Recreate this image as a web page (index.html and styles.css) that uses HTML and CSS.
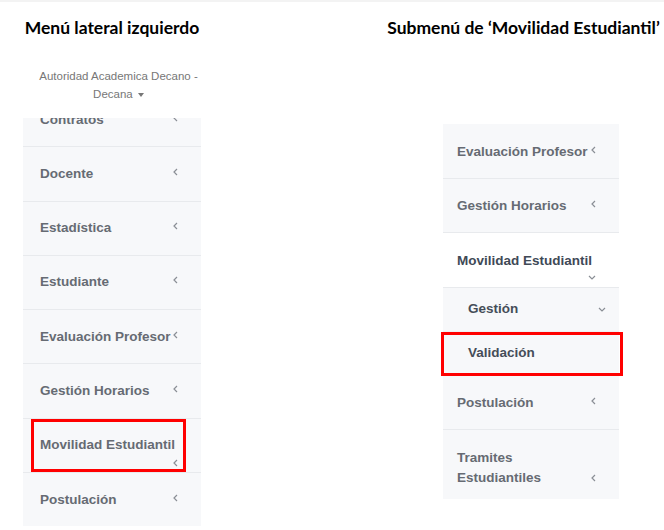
FILE: index.html
```html
<!DOCTYPE html>
<html lang="es">
<head>
  <meta charset="UTF-8"/>
  <meta name="viewport" content="width=device-width,initial-scale=1.0"/>
  <title>Menú lateral – Movilidad Estudiantil</title>
  <link rel="stylesheet" href="styles.css">
</head>
<body>
  <div class="page">

    <section class="col col-left">
      <h2>Menú lateral izquierdo</h2>
      <div class="user">Autoridad Academica Decano - Decana <span class="caret"></span></div>

      <div class="menu menu-left">
        <ul class="menu-list scrolled">
          <li class="item"><span>Contratos</span><svg class="chev" viewBox="0 0 5 8"><polyline points="4,1 1,4 4,7"/></svg></li>
          <li class="item"><span>Docente</span><svg class="chev" viewBox="0 0 5 8"><polyline points="4,1 1,4 4,7"/></svg></li>
          <li class="item"><span>Estadística</span><svg class="chev" viewBox="0 0 5 8"><polyline points="4,1 1,4 4,7"/></svg></li>
          <li class="item"><span>Estudiante</span><svg class="chev" viewBox="0 0 5 8"><polyline points="4,1 1,4 4,7"/></svg></li>
          <li class="item"><span>Evaluación Profesor</span><svg class="chev" viewBox="0 0 5 8"><polyline points="4,1 1,4 4,7"/></svg></li>
          <li class="item"><span>Gestión Horarios</span><svg class="chev" viewBox="0 0 5 8"><polyline points="4,1 1,4 4,7"/></svg></li>
          <li class="item marked marked-left"><span>Movilidad Estudiantil</span><svg class="chev" viewBox="0 0 5 8"><polyline points="4,1 1,4 4,7"/></svg></li>
          <li class="item"><span>Postulación</span><svg class="chev" viewBox="0 0 5 8"><polyline points="4,1 1,4 4,7"/></svg></li>
        </ul>
      </div>
    </section>

    <section class="col col-right">
      <h2>Submenú de ‘Movilidad Estudiantil’</h2>

      <div class="menu menu-right">
        <ul class="menu-list">
          <li class="item"><span>Evaluación Profesor</span><svg class="chev" viewBox="0 0 5 8"><polyline points="4,1 1,4 4,7"/></svg></li>
          <li class="item"><span>Gestión Horarios</span><svg class="chev" viewBox="0 0 5 8"><polyline points="4,1 1,4 4,7"/></svg></li>
          <li class="item open"><span>Movilidad Estudiantil</span><svg class="chev down" viewBox="0 0 8 5"><polyline points="1,1 4,4 7,1"/></svg></li>
          <li class="item sub"><span>Gestión</span><svg class="chev down" viewBox="0 0 8 5"><polyline points="1,1 4,4 7,1"/></svg></li>
          <li class="item sub marked marked-right"><span>Validación</span></li>
          <li class="item"><span>Postulación</span><svg class="chev" viewBox="0 0 5 8"><polyline points="4,1 1,4 4,7"/></svg></li>
          <li class="item tall"><span>Tramites Estudiantiles</span><svg class="chev" viewBox="0 0 5 8"><polyline points="4,1 1,4 4,7"/></svg></li>
        </ul>
      </div>
    </section>

  </div>
</body>
</html>
```

FILE: styles.css
```css
* { box-sizing:border-box; margin:0; padding:0; }
body {
  background:#fff; color:#000;
  font-family:"Liberation Sans",Arial,sans-serif;
  border-top:2px solid #f3f3f3;
}
.page { display:flex; align-items:flex-start; }

.col h2 {
  font-family:Lato,"Open Sans",sans-serif;
  font-weight:700; font-size:17.5px; line-height:22px;
  padding-top:15px; text-align:center; white-space:nowrap;
  color:#000;
}
.col-left { width:178px; margin-left:23px; }
.col-right { width:281px; margin-left:182px; }

.user {
  margin-top:28px; padding:0 0 0 13px;
  font-size:11.5px; line-height:18px;
  color:#777; text-align:center;
}
.caret {
  display:inline-block; vertical-align:middle;
  border-top:4px solid #777;
  border-left:3.5px solid transparent;
  border-right:3.5px solid transparent;
  margin-left:2px;
}

.menu { background:#f7f8fa; }
.menu-left {
  margin-top:15px; height:408px; overflow:hidden;
}
.menu-right {
  margin-top:85px; margin-left:60px; width:176px;
}
.menu-list { list-style:none; }
.menu-list.scrolled { margin-top:-25px; }

.item {
  position:relative;
  font-size:13.5px; font-weight:700; line-height:20px;
  color:#666b73;
  border-bottom:1.5px solid #e8eaed;
}
.menu-left .item {
  height:54.3px; padding:16.5px 23px 0 17px;
}
.menu-right .item {
  height:54.5px; padding:17.5px 23px 0 14px;
}
.chev {
  float:right; width:5px; height:8px; margin-top:4px;
  fill:none; stroke:#8a8e95; stroke-width:1.2;
}
.chev.down { width:8px; height:5px; margin-top:8px; }

.menu-right .item.open { background:#fff; color:#404956; }
.menu-right .item.open .chev { margin-top:4px; }
.menu-right .item.sub {
  height:44px; padding:11px 13px 0 25px;
  color:#454d58; border-bottom-color:#eef0f2;
}
.menu-right .item.sub .chev { margin-top:8px; }
.menu-right .item.tall { height:69px; padding-top:18px; border-bottom:none; }
.menu-right .item.tall .chev { margin-top:6px; }

.marked::after {
  content:""; position:absolute;
  border:3px solid #f00;
}
.marked-left::after { left:8px; right:15px; top:0; bottom:0; }
.marked-right::after { left:-2px; right:-4px; top:0; bottom:-1px; }
```
